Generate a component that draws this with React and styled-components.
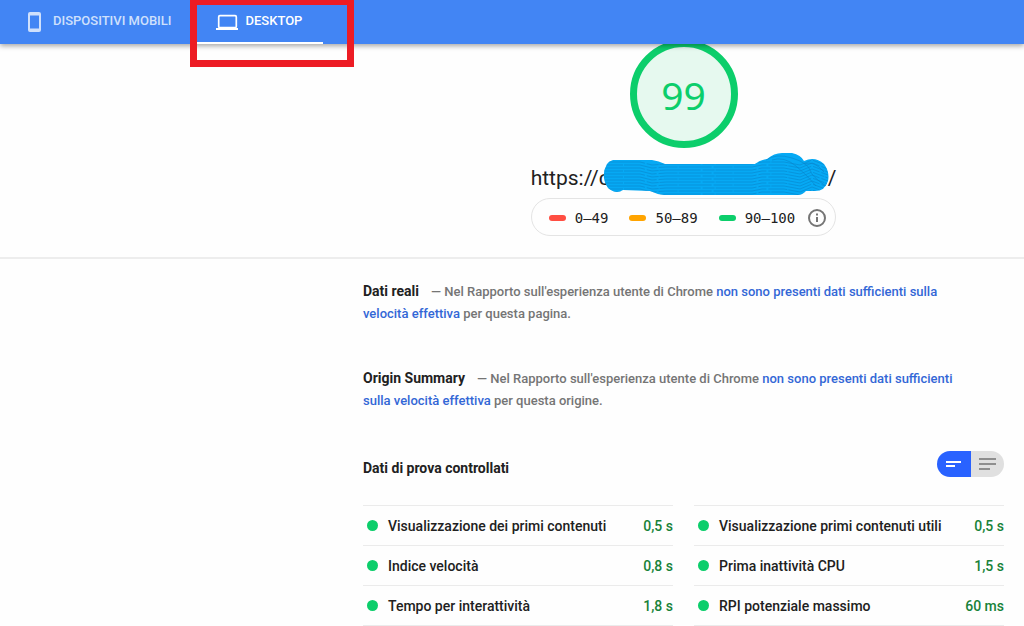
import React, { useState } from 'react';
import styled, { createGlobalStyle } from 'styled-components';

const GlobalStyle = createGlobalStyle`
  * {
    box-sizing: border-box;
  }

  body {
    margin: 0;
    background-color: #fefefe;
    color: #212121;
    font-family: Roboto, 'Liberation Sans', sans-serif;
    overflow-x: hidden;
  }
`;

const TopBar = styled.nav`
  position: sticky;
  top: 0;
  z-index: 2;
  display: flex;
  height: 44px;
  background-color: #4285f4;
  box-shadow: 0 2px 5px rgba(0, 0, 0, 0.35);
`;

const Tab = styled.button`
  position: relative;
  display: flex;
  align-items: center;
  gap: 6px;
  padding: 0 21px 0 23px;
  border: 0;
  border-bottom: 2px solid ${({ $active }) => ($active ? '#fff' : 'transparent')};
  background: none;
  color: ${({ $active }) => ($active ? '#fff' : '#cfe0fc')};
  font-family: inherit;
  font-size: 13px;
  font-weight: 500;
  line-height: 16px;
  text-transform: uppercase;
  cursor: pointer;
`;

/* Riquadro rosso sopra la scheda */
const Highlight = styled.span`
  position: absolute;
  top: -2px;
  left: -3px;
  width: 164px;
  height: 69px;
  border: 7px solid #ed1c24;
  pointer-events: none;
`;

const Column = styled.div`
  padding: 0 20px 0 363px;

  @media (max-width: 768px) {
    padding: 0 20px;
  }
`;

const Summary = styled.header`
  border-bottom: 2px solid #ededed;
`;

const SummaryContent = styled(Column)`
  display: flex;
  flex-direction: column;
  align-items: center;
  padding-bottom: 21px;
`;

const Gauge = styled.div`
  display: flex;
  align-items: center;
  justify-content: center;
  width: 108px;
  height: 108px;
  margin-top: -4px;
  border: 7px solid #0cce6b;
  border-radius: 50%;
  background-color: #e6f9ef;
  color: #0cce6b;
  font-family: 'Noto Sans', sans-serif;
  font-size: 39px;
`;

const Url = styled.div`
  display: flex;
  align-items: flex-end;
  height: 50px;
  padding-bottom: 2px;
  font-size: 21px;
  line-height: 36px;
`;

const Scribble = styled.svg`
  position: relative;
  flex: none;
  margin: 0 -2px 0 -8px;
`;

const Scale = styled.div`
  display: flex;
  align-items: center;
  gap: 21px;
  height: 38px;
  padding: 1px 8px 0 17px;
  border: 1px solid #e4e4e4;
  border-radius: 19px;
  font-family: 'DejaVu Sans Mono', monospace;
  font-size: 14px;
`;

const Range = styled.span`
  display: flex;
  align-items: center;
  gap: 9px;

  &::before {
    content: '';
    width: 17px;
    height: 6px;
    border-radius: 3px;
    background-color: ${({ $color }) => $color};
  }
`;

const InfoButton = styled.button`
  display: flex;
  margin-left: -9px;
  padding: 0;
  border: 0;
  background: none;
  cursor: pointer;
`;

const Field = styled.p`
  max-width: 600px;
  margin: 0 0 ${({ $last }) => ($last ? '39px' : '42px')};
  color: #757575;
  font-size: 13px;
  font-weight: 500;
  line-height: 22px;
`;

const FieldTitle = styled.strong`
  margin-right: 12px;
  color: #212121;
  font-size: 14px;
  font-weight: 700;
`;

const Link = styled.a`
  color: #3367d6;
  text-decoration: none;
`;

const Report = styled(Column).attrs({ as: 'main' })`
  display: block;
  padding-top: 21px;
`;

const LabHeader = styled.div`
  display: flex;
  justify-content: space-between;
  height: 54px;
`;

const LabTitle = styled.h2`
  margin: 6px 0 0;
  font-size: 14px;
  font-weight: 700;
  line-height: 22px;
`;

const Toggle = styled.div`
  display: flex;
  width: 67px;
  height: 26px;
  border-radius: 13px;
  overflow: hidden;
`;

const ToggleButton = styled.button`
  display: flex;
  flex: 1;
  align-items: center;
  justify-content: center;
  padding: 0;
  border: 0;
  background-color: ${({ $active }) => ($active ? '#2962ff' : '#e0e0e0')};
  color: ${({ $active }) => ($active ? '#fff' : '#8e8e8e')};
  cursor: pointer;
`;

const Metrics = styled.div`
  display: grid;
  grid-template-columns: 1fr 1fr;
  column-gap: 21px;

  @media (max-width: 480px) {
    grid-template-columns: 1fr;
  }
`;

const MetricColumn = styled.dl`
  margin: 0;
  border-top: 1px solid #ebebeb;
`;

const Metric = styled.div`
  display: flex;
  align-items: center;
  justify-content: space-between;
  height: 40px;
  border-bottom: 1px solid #ebebeb;
  font-size: 14px;
  font-weight: 500;
  line-height: 22px;
`;

const MetricName = styled.dt`
  display: flex;
  align-items: center;
  gap: 10px;
  padding-left: 4px;

  &::before {
    content: '';
    width: 11px;
    height: 11px;
    border-radius: 50%;
    background-color: #0cce6b;
  }
`;

const MetricValue = styled.dd`
  margin: 0;
  color: #178239;
`;

const ranges = [
  { label: '0–49', color: '#ff4e42' },
  { label: '50–89', color: '#ffa400' },
  { label: '90–100', color: '#0cce6b' }
];

const metrics = [
  [
    { name: 'Visualizzazione dei primi contenuti', value: '0,5 s' },
    { name: 'Indice velocità', value: '0,8 s' },
    { name: 'Tempo per interattività', value: '1,8 s' }
  ],
  [
    { name: 'Visualizzazione primi contenuti utili', value: '0,5 s' },
    { name: 'Prima inattività CPU', value: '1,5 s' },
    { name: 'RPI potenziale massimo', value: '60 ms' }
  ]
];

const strokes = [11, 14, 17, 20, 23, 26, 29, 32, 35, 38, 41];

function PhoneIcon() {
  return (
    <svg width="24" height="24" viewBox="0 0 24 24" fill="currentColor" aria-hidden="true">
      <path fillRule="evenodd" d="M7 3h9a2 2 0 0 1 2 2v16a2 2 0 0 1-2 2H7a2 2 0 0 1-2-2V5a2 2 0 0 1 2-2zM7 6.500v13h9v-13z" />
    </svg>
  );
}

function LaptopIcon() {
  return (
    <svg width="24" height="24" viewBox="0 0 24 24" aria-hidden="true">
      <rect x="2.700" y="6.700" width="17.600" height="12" rx="1.200" fill="none" stroke="currentColor" strokeWidth="1.700" />
      <path d="M0 19h22v2H0z" fill="currentColor" />
    </svg>
  );
}

function UrlScribble() {
  return (
    <Scribble width="228" height="44" viewBox="0 0 228 44" aria-hidden="true">
      <defs>
        <clipPath id="brush">
          <path d="M11 8H50Q57 9 63 12H153Q158 8 165 7Q172 1 180 1H190Q199 3 202 9Q213 4 222 12Q228 20 226 29Q223 39 213 39H204Q200 43 196 43H62Q54 42 48 39L21 38Q14 43 6 36Q-2 24 5 12Q7 9 11 8Z" />
        </clipPath>
      </defs>
      <g clipPath="url(#brush)">
        <rect width="228" height="44" fill="#06a9f4" />
        <g fill="none" stroke="#0a84c8" strokeWidth="1" strokeOpacity="0.55">
          {strokes.map((y, index) => (
            <path
              key={y}
              strokeDasharray={index % 2 ? '19 1 33 2' : '41 2 12 1'}
              d={`M2 ${y - 1}H38L50 ${y + 2}L64 ${y + 1}H150L160 ${y - 1}H182L198 ${y + 2}L210 ${y - 3}L226 ${y + 3}`}
            />
          ))}
          <path d="M164 8Q174 1 190 6T208 18T224 34M170 8Q182 4 194 14T214 34M202 12Q212 8 222 20" />
        </g>
      </g>
    </Scribble>
  );
}

function App() {
  const [device, setDevice] = useState('desktop');
  const [expanded, setExpanded] = useState(false);

  return (
    <>
      <GlobalStyle />
      <TopBar>
        <Tab $active={device === 'mobile'} onClick={() => setDevice('mobile')}>
          <PhoneIcon />
          Dispositivi mobili
        </Tab>
        <Tab $active={device === 'desktop'} onClick={() => setDevice('desktop')}>
          <LaptopIcon />
          Desktop
          <Highlight />
        </Tab>
      </TopBar>

      <Summary>
        <SummaryContent>
          <Gauge>99</Gauge>
          <Url>
            https://c
            <UrlScribble />/
          </Url>
          <Scale>
            {ranges.map((range) => (
              <Range key={range.label} $color={range.color}>{range.label}</Range>
            ))}
            <InfoButton aria-label="Informazioni">
              <svg width="20" height="20" viewBox="0 0 20 20" fill="none" stroke="#757575" strokeWidth="2">
                <circle cx="10" cy="10" r="8" />
                <path d="M10 9v5M10 5.500v2" />
              </svg>
            </InfoButton>
          </Scale>
        </SummaryContent>
      </Summary>

      <Report>
        <Field>
          <FieldTitle>Dati reali</FieldTitle>
          — Nel Rapporto sull'esperienza utente di Chrome{' '}
          <Link href="#dati">non sono presenti dati sufficienti sulla velocità effettiva</Link> per questa pagina.
        </Field>
        <Field $last>
          <FieldTitle>Origin Summary</FieldTitle>
          — Nel Rapporto sull'esperienza utente di Chrome{' '}
          <Link href="#origine">non sono presenti dati sufficienti sulla velocità effettiva</Link> per questa origine.
        </Field>

        <LabHeader>
          <LabTitle>Dati di prova controllati</LabTitle>
          <Toggle>
            <ToggleButton aria-label="Vista compatta" $active={!expanded} onClick={() => setExpanded(false)}>
              <svg width="17" height="14" viewBox="0 0 17 14" stroke="currentColor" strokeWidth="2" aria-hidden="true">
                <path d="M1 5h15M1 9h9" />
              </svg>
            </ToggleButton>
            <ToggleButton aria-label="Vista estesa" $active={expanded} onClick={() => setExpanded(true)}>
              <svg width="17" height="14" viewBox="0 0 17 14" stroke="currentColor" strokeWidth="2" aria-hidden="true">
                <path d="M0 2h17M0 7h17M0 12h11" />
              </svg>
            </ToggleButton>
          </Toggle>
        </LabHeader>

        <Metrics>
          {metrics.map((column, index) => (
            <MetricColumn key={index}>
              {column.map((metric) => (
                <Metric key={metric.name}>
                  <MetricName>{metric.name}</MetricName>
                  <MetricValue>{metric.value}</MetricValue>
                </Metric>
              ))}
            </MetricColumn>
          ))}
        </Metrics>
      </Report>
    </>
  );
}

export default App;
